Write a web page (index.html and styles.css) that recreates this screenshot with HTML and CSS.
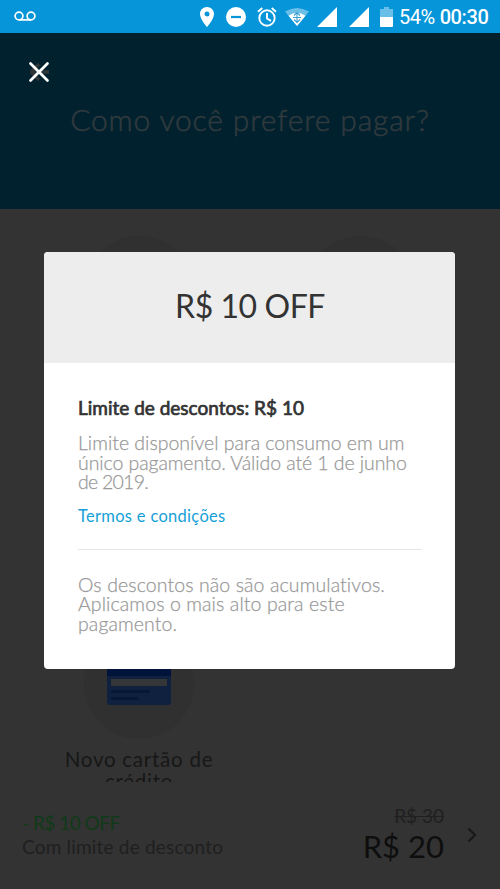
FILE: index.html
```html
<!DOCTYPE html>
<html lang="pt-BR">
<head>
<meta charset="utf-8">
<title>Como você prefere pagar?</title>
<link rel="stylesheet" href="styles.css">
</head>
<body>
<div class="phone">
  <header class="status">
    <svg class="voicemail" viewBox="0 0 22 12" width="22" height="12"><g fill="none" stroke="#fff" stroke-width="1.7"><circle cx="5" cy="6" r="3.9"/><circle cx="17" cy="6" r="3.9"/><path d="M5 9.900h12"/></g></svg>
    <svg class="pin" viewBox="0 0 14 20" width="14" height="20"><path fill="#fff" fill-rule="evenodd" d="M7 0C3.100 0 0 3.100 0 7c0 5.200 7 13 7 13s7-7.800 7-13c0-3.900-3.100-7-7-7zm0 4.500a2.500 2.500 0 1 1 0 5 2.500 2.500 0 0 1 0-5z"/></svg>
    <svg class="dnd" viewBox="0 0 20 20" width="20" height="20"><circle cx="10" cy="10" r="10" fill="#fff"/><path d="M5 10h10" stroke="#0595d8" stroke-width="2.200"/></svg>
    <svg class="alarm" viewBox="0 0 20 20" width="20" height="20"><g fill="none" stroke="#fff" stroke-width="1.900"><circle cx="10" cy="11" r="7.700"/><path d="M10 6v5.500l4 2.400M1 4.700l4.300-3.600M19 4.700l-4.300-3.600"/></g></svg>
    <svg class="wifi" viewBox="0 0 24 18" width="24" height="18"><path fill="#69bfe8" d="M0 3.500Q12-3.500 24 3.500L12 18z"/><path fill="#fff" d="M3.500 7.800Q12 1.500 20.500 7.800L12 18z"/><g fill="none" stroke="#3a9fd0" stroke-width="1.100"><path d="M9 7.500l3-3 3 3M9 11.500l3 3 3-3M8 9.500h8M12 5v9"/></g></svg>
    <svg class="signal" viewBox="0 0 20 20" width="20" height="20"><path fill="#fff" d="M20 0v20H0z"/></svg>
    <svg class="signal" viewBox="0 0 20 20" width="20" height="20"><path fill="#fff" d="M20 0v20H0z"/></svg>
    <svg class="battery" viewBox="0 0 13 20" width="13" height="20"><path fill="#69bfe8" d="M0 2h4V0h5v2h4v8H0z"/><path fill="#fff" d="M0 10h13v9q0 1-1 1H1q-1 0-1-1z"/></svg>
    <span class="percent">54%</span>
    <span class="clock">00:30</span>
  </header>

  <section class="hero">
    <svg class="close" viewBox="0 0 24 24" width="24" height="24"><path d="M4 12h18M4 12l8-8M4 12l8 8" fill="none" stroke="#303638" stroke-width="3.500"/><path d="M3.500 3.500l17 17M20.500 3.500l-17 17" stroke="#fff" stroke-width="2.700" stroke-linecap="round"/></svg>
    <h1 class="title"><span>Como você prefere pagar?</span></h1>
  </section>

  <main class="options">
    <div class="option"><div class="disc"></div></div>
    <div class="option"><div class="disc"></div></div>
    <div class="option">
      <div class="disc">
        <svg viewBox="0 0 64 46" width="64" height="46"><rect width="64" height="46" rx="3" fill="#10203f"/><path d="M0 3q0-3 3-3h58q3 0 3 3v14H0z" fill="#00133b"/><path d="M4 20h56v7H4z" fill="#343638"/><path d="M4 32.500h39M4 39.500h28" stroke="#051738" stroke-width="2.500"/></svg>
      </div>
      <p class="label"><span>Novo cartão de</span><br><span>crédito</span></p>
    </div>
  </main>

  <footer class="summary">
    <div class="discount">
      <p class="off"><span>- R$ 10 OFF</span></p>
      <p class="limit"><span>Com limite de desconto</span></p>
    </div>
    <div class="prices">
      <p class="before"><span>R$ 30</span></p>
      <p class="total"><span>R$ 20</span></p>
    </div>
    <svg class="chevron" viewBox="0 0 10 16" width="10" height="16"><path d="M1.500 1.500L8 8l-6.500 6.500" fill="none" stroke="#191919" stroke-width="2.200"/></svg>
  </footer>

  <article class="modal">
    <h2 class="amount"><span>R$ 10 OFF</span></h2>
    <div class="details">
      <h3 class="heading"><span>Limite de descontos: R$ 10</span></h3>
      <p class="text"><span>Limite disponível para consumo em um</span><br><span class="tight">único pagamento. Válido até 1 de junho</span><br><span class="tighter">de 2019.</span></p>
      <a class="terms"><span>Termos e condições</span></a>
      <hr class="rule">
      <p class="text wide"><span>Os descontos não são acumulativos.</span><br><span>Aplicamos o mais alto para este</span><br><span>pagamento.</span></p>
    </div>
  </article>
</div>
</body>
</html>
```
FILE: styles.css
```css
* { box-sizing: border-box; margin: 0; padding: 0; }
body { background: #333; font-family: Lato, "Open Sans", sans-serif; font-variant-ligatures: none; }
.phone { position: relative; width: 500px; height: 889px; overflow: hidden; display: flex; flex-direction: column; background: #333; }
svg { display: block; flex: none; }
.status { height: 33px; flex: none; display: flex; align-items: center; padding: 1px 0 0 14px; background: #0595d8; color: #fff; font-family: Roboto, sans-serif; font-size: 20px; white-space: nowrap; }
.voicemail { margin: -2px 164px 0 0; }
.pin { margin-right: 12px; }
.dnd { margin-right: 11px; }
.alarm { margin-right: 8px; }
.wifi { margin-right: 8px; }
.signal { margin-right: 12px; }
.battery { margin: 0 6px 0 -1px; }
.percent { letter-spacing: -0.5px; margin-right: 5px; }
.clock { font-weight: 500; letter-spacing: -0.4px; }
.hero { height: 176px; flex: none; padding: 27px 0 0 27px; background: #00212d; }
.title { margin: 16px 27px 0 0; text-align: center; font-size: 30px; line-height: 38px; font-weight: 300; color: #313a3f; -webkit-text-stroke: 0.5px #313a3f; letter-spacing: 0.85px; white-space: nowrap; }
.options { height: 573px; flex: none; overflow: hidden; display: grid; grid-template-columns: 222px 222px; grid-template-rows: 393px 200px; padding: 27px 28px 0; }
.option { display: flex; flex-direction: column; align-items: center; }
.disc { width: 110px; height: 110px; flex: none; border-radius: 50%; background: #303030; display: flex; align-items: center; justify-content: center; }
.disc svg { margin-top: -4px; }
.label { margin-top: 9px; text-align: center; font-size: 20.500px; line-height: 22px; color: #171717; letter-spacing: 0.75px; }
.summary { height: 107px; flex: none; display: flex; padding: 0 23px 0 22px; background: #333; white-space: nowrap; }
.discount { flex: 1; padding-top: 29px; font-size: 19px; line-height: 24px; }
.off { color: #113a19; letter-spacing: -0.5px; }
.limit { color: #1f1f1f; letter-spacing: 0.2px; }
.prices { text-align: right; padding-top: 22px; }
.before { font-size: 19px; line-height: 24px; color: #202020; text-decoration: line-through; }
.total { font-size: 31px; line-height: 36px; color: #0e0e0e; }
.chevron { margin: 45px 0 0 23px; }
.modal { position: absolute; left: 44px; top: 252px; width: 411px; height: 417px; border-radius: 4px; overflow: hidden; background: #fff; }
.amount { height: 111px; padding-left: 1px; background: #ededed; color: #333; text-align: center; font-size: 32px; line-height: 108px; font-weight: 400; letter-spacing: -0.45px; }
.details { padding: 33px 33px 0 34px; white-space: nowrap; }
.heading { font-size: 19px; line-height: 24px; font-weight: 400; color: #333; -webkit-text-stroke: 0.7px #333; letter-spacing: 0; }
.text { margin-top: 13px; font-size: 19.500px; line-height: 19.500px; font-weight: 300; color: #999; -webkit-text-stroke: 0.25px #999; }
.tight { letter-spacing: -0.08px; }
.tighter { letter-spacing: -0.75px; }
.wide { letter-spacing: 0.1px; }
.terms { display: block; margin-top: 13px; font-size: 16.500px; line-height: 22px; color: #159fd8; letter-spacing: 0.3px; }
.rule { height: 1px; border: 0; margin: 22px 0 25px; background: #e6e6e6; }
```
